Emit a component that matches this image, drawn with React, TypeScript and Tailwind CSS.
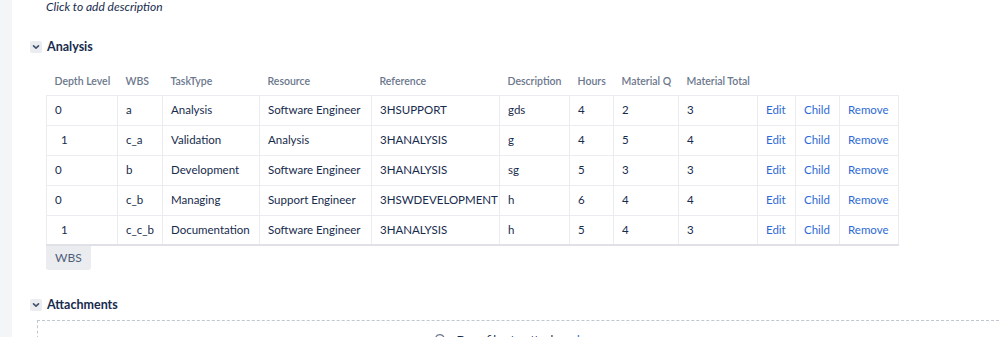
import React from "react";

type Row = {
  depth: string;
  wbs: string;
  taskType: string;
  resource: string;
  reference: string;
  description: string;
  hours: string;
  matQ: string;
  matTotal: string;
};

const rows: Row[] = [
  { depth: "0", wbs: "a", taskType: "Analysis", resource: "Software Engineer", reference: "3HSUPPORT", description: "gds", hours: "4", matQ: "2", matTotal: "3" },
  { depth: "1", wbs: "c_a", taskType: "Validation", resource: "Analysis", reference: "3HANALYSIS", description: "g", hours: "4", matQ: "5", matTotal: "4" },
  { depth: "0", wbs: "b", taskType: "Development", resource: "Software Engineer", reference: "3HANALYSIS", description: "sg", hours: "5", matQ: "3", matTotal: "3" },
  { depth: "0", wbs: "c_b", taskType: "Managing", resource: "Support Engineer", reference: "3HSWDEVELOPMENT", description: "h", hours: "6", matQ: "4", matTotal: "4" },
  { depth: "1", wbs: "c_c_b", taskType: "Documentation", resource: "Software Engineer", reference: "3HANALYSIS", description: "h", hours: "5", matQ: "4", matTotal: "3" },
];

const headers = ["Depth Level", "WBS", "TaskType", "Resource", "Reference", "Description", "Hours", "Material Q", "Material Total", "", "", ""];
const widths = ["w-[71px]", "w-[45px]", "w-[97px]", "w-[112px]", "w-[128px]", "w-[70px]", "w-[44px]", "w-[65px]", "w-[79px]", "w-[38px]", "w-[44px]", "w-[59px]"];

const Chevron = () => (
  <span className="flex items-center justify-center w-[12px] h-[12px] rounded-[2px] bg-[#ebecf0]">
    <svg width="8" height="8" viewBox="0 0 8 8" fill="none">
      <path d="M1.5 2.8 L4 5.2 L6.5 2.8" stroke="#42526e" strokeWidth="1.6" strokeLinecap="round" strokeLinejoin="round" />
    </svg>
  </span>
);

const cell = "h-[30px] px-[8px] border border-[#ebecf0] whitespace-nowrap overflow-hidden";

export default function App() {
  return (
    <div className="flex w-[999px] h-[337px] overflow-hidden bg-white text-[#172b4d] font-['Lato','Liberation_Sans',sans-serif] text-[11.5px]">
      <div className="w-[12px] shrink-0 bg-[#f4f5f7]" />
      <div className="flex-1 pl-[18px]">
        <div className="pl-[16px] italic leading-[13px] text-[12px]">Click to add description</div>

        <div className="mt-[27px] flex items-center gap-[5px] h-[14px]">
          <Chevron />
          <span className="font-bold text-[12.5px]">Analysis</span>
        </div>

        <div className="pl-[16px] mt-[11px]">
          <table className="border-collapse table-fixed w-[852px]">
            <colgroup>
              {widths.map((w, i) => (
                <col key={i} className={w} />
              ))}
            </colgroup>
            <thead>
              <tr className="h-[30px]">
                {headers.map((h, i) => (
                  <th key={i} className="px-[8px] pt-[4px] text-left font-semibold text-[10.5px] text-[#6b778c] whitespace-nowrap">
                    {h}
                  </th>
                ))}
              </tr>
            </thead>
            <tbody className="border-b-2 border-[#dfe1e6]">
              {rows.map((r, i) => (
                <tr key={i}>
                  <td className={cell}>
                    <span className={r.depth === "1" ? "pl-[6px]" : ""}>{r.depth}</span>
                  </td>
                  <td className={cell}>{r.wbs}</td>
                  <td className={cell}>{r.taskType}</td>
                  <td className={cell}>{r.resource}</td>
                  <td className={cell}>{r.reference}</td>
                  <td className={cell}>{r.description}</td>
                  <td className={cell}>{r.hours}</td>
                  <td className={cell}>{r.matQ}</td>
                  <td className={cell}>{r.matTotal}</td>
                  <td className={`${cell} text-[#2d6ad6]`}>Edit</td>
                  <td className={`${cell} text-[#2d6ad6]`}>Child</td>
                  <td className={`${cell} text-[#2d6ad6]`}>Remove</td>
                </tr>
              ))}
            </tbody>
          </table>
          <button className="block h-[24px] px-[9px] rounded-b-[3px] bg-[#ebecf0] text-[#505f79] text-[12px]">WBS</button>
        </div>

        <div className="mt-[28px] flex items-center gap-[5px] h-[14px]">
          <Chevron />
          <span className="font-bold text-[12.5px]">Attachments</span>
        </div>

        <div className="mt-[8px] ml-[7px] h-[40px] border border-dashed border-[#c1c7d0] border-r-0 flex items-start justify-center pt-[10px]">
          <div className="flex items-center gap-[9px] ml-[10px]">
            <svg width="16" height="14" viewBox="0 0 16 14" fill="none">
              <path d="M4 11 H3.5 A3 3 0 0 1 3.5 5 A4.5 4.5 0 0 1 12 4.5 A3.2 3.2 0 0 1 12.5 11 H12" stroke="#6b778c" strokeWidth="1.2" />
              <path d="M8 13 V7.5 M6 9.5 L8 7.5 L10 9.5" stroke="#6b778c" strokeWidth="1.2" />
            </svg>
            <span className="text-[12px]">
              Drop files to attach, or <span className="text-[#2d6ad6]">browse</span>
            </span>
          </div>
        </div>
      </div>
    </div>
  );
}
